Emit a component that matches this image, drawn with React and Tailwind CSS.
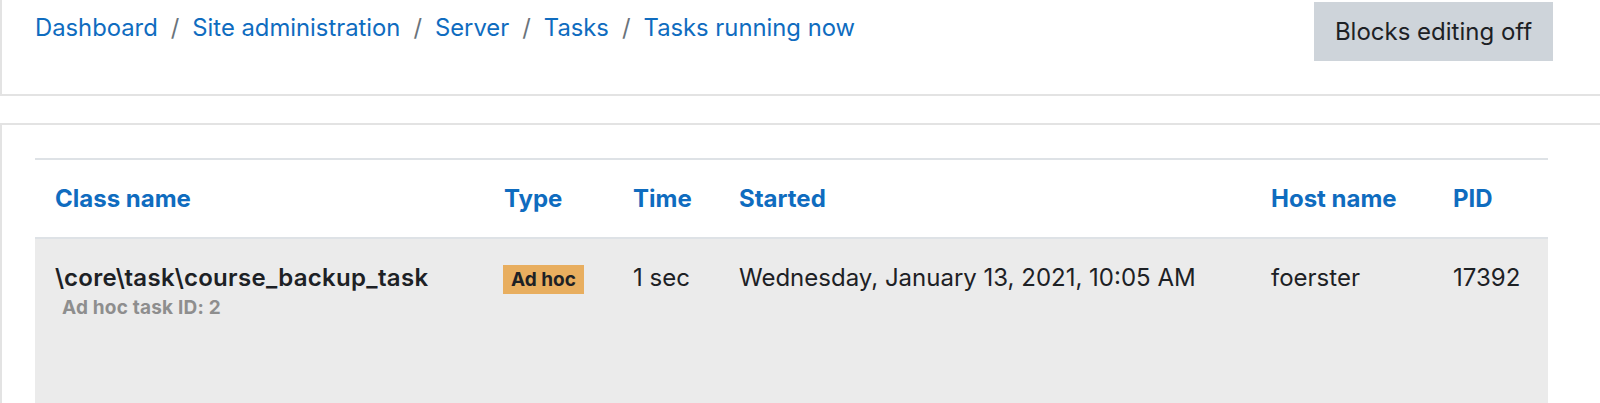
const crumbs = ["Dashboard", "Site administration", "Server", "Tasks", "Tasks running now"];

const columns = ["Class name", "Type", "Time", "Started", "Host name", "PID"];

const App = () => {
    return (
        <div className="h-[403px] overflow-hidden bg-white text-[#1d2125] font-['Inter','Liberation_Sans',sans-serif]">
            {/* page header */}
            <div className="h-[96px] border-l-2 border-b-2 border-[#e3e3e3] flex justify-between items-start pl-[33px] pr-[47px]">
                <nav className="flex items-center text-[23.8px] leading-[36px] pt-[10px]">
                    {crumbs.map((c, i) => (
                        <span key={c} className="flex items-center">
                            {i > 0 && <span className="text-[#6a737b] px-[13px]">/</span>}
                            <a className="text-[#0f6cbf]">{c}</a>
                        </span>
                    ))}
                </nav>
                <button className="mt-[2px] w-[239px] h-[59px] bg-[#ced4da] text-[24px] text-[#1d2125]">
                    Blocks editing off
                </button>
            </div>

            <div className="h-[27px]" />

            {/* main card */}
            <div className="border-l-2 border-t-2 border-[#e3e3e3] pl-[33px] pr-[52px] pt-[33px]">
                <div className="border-t-2 border-[#dee2e6]">
                    <div className="grid grid-cols-[449px_129px_106px_532px_182px_115px] h-[79px] items-center border-b-2 border-[#dee2e6] text-[24px] font-bold text-[#0f6cbf]">
                        {columns.map((c) => (
                            <div key={c} className="px-[20px]">{c}</div>
                        ))}
                    </div>
                    <div className="grid grid-cols-[449px_129px_106px_532px_182px_115px] h-[170px] bg-[#ebebeb] text-[24px] items-start pt-[21px]">
                        <div className="px-[20px]">
                            <div className="font-semibold leading-[36px] tracking-[0.3px] text-[#1d2125]">\core\task\course_backup_task</div>
                            <div className="pl-[7px] text-[19px] font-bold text-[#8e8e8e] leading-[24px] tracking-[0.2px]">Ad hoc task ID: 2</div>
                        </div>
                        <div className="px-[19px]">
                            <span className="inline-block bg-[#e8ae5f] text-[#1d2125] text-[19px] font-bold leading-[29px] px-[8px]">Ad hoc</span>
                        </div>
                        <div className="px-[20px] leading-[36px]">1 sec</div>
                        <div className="px-[20px] leading-[36px]">Wednesday, January 13, 2021, 10:05 AM</div>
                        <div className="px-[20px] leading-[36px]">foerster</div>
                        <div className="px-[20px] leading-[36px]">17392</div>
                    </div>
                </div>
            </div>
        </div>
    );
};

export default App;
